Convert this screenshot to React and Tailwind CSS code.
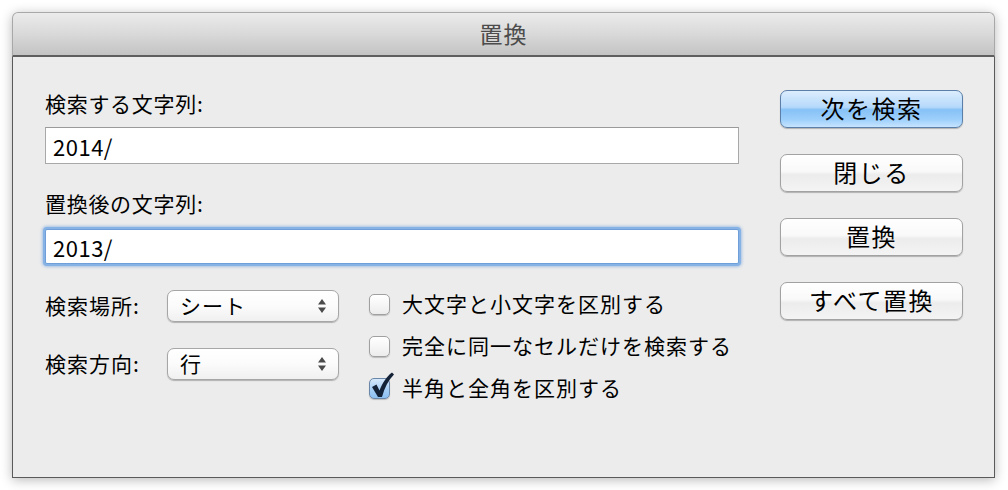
import React from "react";

const font = { fontFamily: '"Noto Sans CJK JP", "Noto Sans", sans-serif' };

function Button({ children, primary }) {
  return (
    <div
      className={
        "h-[38px] w-[183px] rounded-[7px] border flex items-center justify-center text-[24px] tracking-[1.5px] text-black shadow-[0_1px_1px_rgba(0,0,0,0.25)] " +
        (primary
          ? "border-[#5b7fa8] bg-[linear-gradient(to_bottom,#dcedfd_0%,#b5d9fb_45%,#86c1f6_52%,#9fd0fb_80%,#c6e4fe_100%)]"
          : "border-[#a2a2a2] bg-[linear-gradient(to_bottom,#ffffff_0%,#f9f9f9_45%,#ececec_55%,#f4f4f4_100%)]")
      }
    >
      <span className="leading-none -mt-[2px]">{children}</span>
    </div>
  );
}

function Select({ value }) {
  return (
    <div className="h-[32px] w-[172px] rounded-[7px] border border-[#a6a6a6] bg-[linear-gradient(to_bottom,#ffffff_0%,#fbfbfb_50%,#f0f0f0_100%)] shadow-[0_1px_1px_rgba(0,0,0,0.25)] flex items-center pl-[12px] pr-[11px]">
      <span className="flex-1 text-[21px] tracking-[1px] leading-none text-black -mt-[2px]">{value}</span>
      <svg width="10" height="16" viewBox="0 0 10 16">
        <path d="M5 1 L9 6.5 L1 6.5 Z" fill="#4a4a4a" />
        <path d="M5 15 L9 9.5 L1 9.5 Z" fill="#4a4a4a" />
      </svg>
    </div>
  );
}

function Checkbox({ checked, label }) {
  return (
    <div className="h-[42px] flex items-center">
      <div className="relative w-[21px] h-[21px]">
        <div
          className={
            "w-[21px] h-[21px] rounded-[5px] border shadow-[0_1px_1px_rgba(0,0,0,0.2)] " +
            (checked
              ? "border-[#6a86a8] bg-[linear-gradient(to_bottom,#d6e9fb_0%,#a9d0f5_50%,#8cc0f2_100%)]"
              : "border-[#a0a0a0] bg-[linear-gradient(to_bottom,#ffffff_0%,#f6f6f6_50%,#ececec_100%)]")
          }
        />
        {checked && (
          <svg className="absolute left-[1px] -top-[6px]" width="26" height="28" viewBox="0 0 26 28">
            <path
              d="M2 15 L6.5 12.5 L9.5 18.5 C12.5 11 16.5 4.5 22 0.5 L24 2.5 C18.5 8 14.5 15.5 12 25 L8 25 Z"
              fill="#142238"
            />
          </svg>
        )}
      </div>
      <span className="ml-[12px] text-[21px] tracking-[1px] leading-none text-black -mt-[2px]">{label}</span>
    </div>
  );
}

export default function App() {
  return (
    <div className="w-[1008px] h-[490px] bg-white pt-[12px] pl-[12px]" style={font}>
      <div className="w-[983px] h-[466px] flex flex-col rounded-t-[6px] shadow-[0_2px_12px_rgba(0,0,0,0.28)]">
        <div className="h-[45px] shrink-0 rounded-t-[6px] border border-b-2 border-[#a8a8a8] border-b-[#5e5e5e] bg-[linear-gradient(to_bottom,#ebebeb_0%,#d9d9d9_50%,#c3c3c3_100%)] flex items-center justify-center">
          <span className="text-[23px] leading-none text-[#4c4c4c] -mt-[2px] tracking-[1px]">置換</span>
        </div>
        <div className="flex-1 bg-[#ececec] border border-t-0 border-[#5a5a5a] flex pl-[32px]">
          <div className="w-[694px] flex flex-col pt-[32px]">
            <div className="h-[28px] flex items-center text-[21px] tracking-[0.7px] text-black leading-none">検索する文字列:</div>
            <div className="mt-[10px] h-[37px] bg-white border border-[#a9a9a9] border-t-[#9a9a9a] flex items-center pl-[7px]">
              <span className="text-[22px] leading-none text-black tracking-[0.5px]">2014/</span>
            </div>
            <div className="mt-[25px] h-[28px] flex items-center text-[21px] tracking-[0.7px] text-black leading-none">置換後の文字列:</div>
            <div className="mt-[12px] h-[35px] bg-white border border-[#6f9fd8] shadow-[0_0_0_2px_#86b2e6,0_0_3px_3px_rgba(120,165,220,0.6)] rounded-[2px] flex items-center pl-[7px]">
              <span className="text-[22px] leading-none text-black tracking-[0.5px]">2013/</span>
            </div>
            <div className="mt-[19px] flex">
              <div className="w-[324px] pt-[7px] flex flex-col gap-[26px]">
                <div className="flex items-center">
                  <span className="w-[122px] text-[21px] tracking-[1px] leading-none text-black -mt-[2px]">検索場所:</span>
                  <Select value="シート" />
                </div>
                <div className="flex items-center">
                  <span className="w-[122px] text-[21px] tracking-[1px] leading-none text-black -mt-[2px]">検索方向:</span>
                  <Select value="行" />
                </div>
              </div>
              <div className="flex flex-col">
                <Checkbox label="大文字と小文字を区別する" />
                <Checkbox label="完全に同一なセルだけを検索する" />
                <Checkbox checked label="半角と全角を区別する" />
              </div>
            </div>
          </div>
          <div className="ml-[41px] pt-[33px] flex flex-col gap-[26px]">
            <Button primary>次を検索</Button>
            <Button>閉じる</Button>
            <Button>置換</Button>
            <Button>すべて置換</Button>
          </div>
        </div>
      </div>
    </div>
  );
}
